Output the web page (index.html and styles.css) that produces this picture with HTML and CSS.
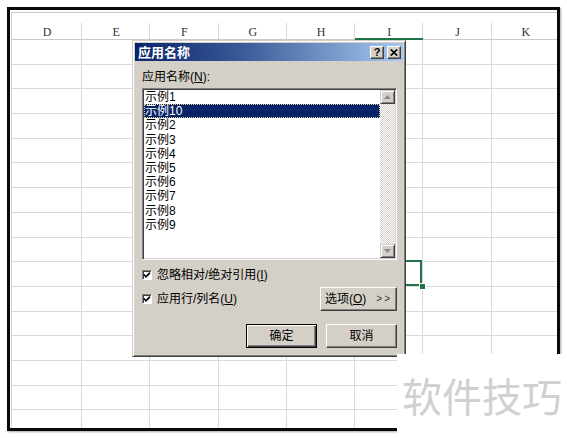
FILE: index.html
```html
<!DOCTYPE html>
<html lang="zh-CN">
<head>
<meta charset="utf-8">
<title>应用名称</title>
<link rel="stylesheet" href="styles.css">
</head>
<body>
<div class="screen">
  <div class="sheet">
    <div class="grid">
      <div class="hd">D</div><div class="hd">E</div><div class="hd">F</div><div class="hd">G</div><div class="hd">H</div><div class="hd on">I</div><div class="hd">J</div><div class="hd">K</div>
      <span></span><span></span><span></span><span></span><span></span><span></span><span></span><span></span>
      <span></span><span></span><span></span><span></span><span></span><span></span><span></span><span></span>
      <span></span><span></span><span></span><span></span><span></span><span></span><span></span><span></span>
      <span></span><span></span><span></span><span></span><span></span><span></span><span></span><span></span>
      <span></span><span></span><span></span><span></span><span></span><span></span><span></span><span></span>
      <span></span><span></span><span></span><span></span><span></span><span></span><span></span><span></span>
      <span></span><span></span><span></span><span></span><span></span><span></span><span></span><span></span>
      <span></span><span></span><span></span><span></span><span></span><span></span><span></span><span></span>
      <span></span><span></span><span></span><span></span><span></span><span></span><span></span><span></span>
      <span></span><span></span><span></span><span></span><span></span><span class="cur"></span><span></span><span></span>
      <span></span><span></span><span></span><span></span><span></span><span></span><span></span><span></span>
      <span></span><span></span><span></span><span></span><span></span><span></span><span></span><span></span>
      <span></span><span></span><span></span><span></span><span></span><span></span><span></span><span></span>
      <span></span><span></span><span></span><span></span><span></span><span></span><span></span><span></span>
      <span></span><span></span><span></span><span></span><span></span><span></span><span></span><span></span>
      <span></span><span></span><span></span><span></span><span></span><span></span><span></span><span></span>
    </div>
  </div>

  <div class="dialog">
    <div class="titlebar">
      <span class="title">应用名称</span>
      <span class="tbtns">
        <span class="tbtn">?</span>
        <span class="tbtn"><svg width="8" height="7" viewBox="0 0 8 7"><path d="M0.8 0.5 L7.2 6.5 M7.2 0.5 L0.8 6.5" stroke="#000" stroke-width="1.7" fill="none"/></svg></span>
      </span>
    </div>
    <div class="dbody">
      <div class="label">应用名称(<u>N</u>):</div>
      <div class="listbox">
        <ul class="items">
          <li>示例1</li>
          <li class="sel">示例10</li>
          <li>示例2</li>
          <li>示例3</li>
          <li>示例4</li>
          <li>示例5</li>
          <li>示例6</li>
          <li>示例7</li>
          <li>示例8</li>
          <li>示例9</li>
        </ul>
        <div class="vscroll">
          <div class="sbtn"><svg width="7" height="4" viewBox="0 0 7 4"><path d="M3.5 0 L7 4 H0 Z" fill="#8a8a8a"/></svg></div>
          <div class="track"></div>
          <div class="sbtn"><svg width="7" height="4" viewBox="0 0 7 4"><path d="M0 0 H7 L3.5 4 Z" fill="#8a8a8a"/></svg></div>
        </div>
      </div>
      <div class="chkrow r1">
        <span class="chk"><svg width="8" height="8" viewBox="0 0 8 8"><path d="M1 3.6 L3 5.8 L7 1.6" stroke="#000" stroke-width="1.6" fill="none"/></svg></span>
        <span>忽略相对/绝对引用(<u>I</u>)</span>
      </div>
      <div class="chkrow r2">
        <span class="chk"><svg width="8" height="8" viewBox="0 0 8 8"><path d="M1 3.6 L3 5.8 L7 1.6" stroke="#000" stroke-width="1.6" fill="none"/></svg></span>
        <span>应用行/列名(<u>U</u>)</span>
        <button class="btn opt">选项(<u>O</u>)<span class="more">&gt;&gt;</span></button>
      </div>
      <div class="actions">
        <button class="btn default">确定</button>
        <button class="btn">取消</button>
      </div>
    </div>
  </div>

  <div class="watermark">软件技巧</div>
</div>
</body>
</html>
```
FILE: styles.css
```css
html, body {
  margin: 0;
  padding: 0;
}
body {
  background: #fff;
  font-family: "Liberation Sans", "Noto Sans CJK SC", sans-serif;
}
.screen {
  position: relative;
  width: 567px;
  height: 438px;
  overflow: hidden;
  background: #fff;
}

/* spreadsheet */
.sheet {
  box-sizing: border-box;
  margin: 7px 0 0 7px;
  width: 553px;
  height: 424px;
  border: 3px solid #0a0a0a;
  overflow: hidden;
  background: #fff;
  box-shadow: 1px 1px 2px rgba(0, 0, 0, 0.35);
}
.grid {
  display: grid;
  grid-template-columns: 70px repeat(7, 68.3px);
  grid-template-rows: 27px;
  grid-auto-rows: 24.7px;
  margin: 2px 0 0 1px;
  border-top: 1px solid #cdcdcd;
  border-left: 1px solid #d6d6d6;
}
.hd {
  box-sizing: border-box;
  border-bottom: 1px solid #c9c9c9;
  display: flex;
  align-items: flex-end;
  justify-content: center;
  font: 12px/14px "Liberation Serif", serif;
  color: #333;
  background: linear-gradient(#d8d8d8, #d8d8d8) right bottom / 1px 16px no-repeat;
}
.hd.on {
  border-bottom-color: #217346;
  box-shadow: inset 0 -1px #217346;
}
.grid > span {
  box-sizing: border-box;
  border-right: 1px solid #dadada;
  border-bottom: 1px solid #dadada;
}
.grid > span.cur {
  position: relative;
}
.cur::before {
  content: "";
  position: absolute;
  top: -2px;
  left: -2px;
  right: 0;
  bottom: 0;
  border: 2px solid #217346;
}
.cur::after {
  content: "";
  position: absolute;
  right: -4px;
  bottom: -4px;
  width: 5px;
  height: 5px;
  background: #217346;
  border: 1px solid #fff;
}

/* dialog */
.dialog {
  position: absolute;
  left: 132px;
  top: 40px;
  width: 274px;
  height: 317px;
  box-sizing: border-box;
  background: #d4d0c8;
  border: 1px solid;
  border-color: #d4d0c8 #404040 #404040 #d4d0c8;
  box-shadow: inset 1px 1px #fff, inset -1px -1px #808080;
  padding: 2px;
  display: flex;
  flex-direction: column;
  font-size: 12px;
  color: #000;
}
.titlebar {
  height: 18px;
  display: flex;
  align-items: center;
  justify-content: space-between;
  padding: 0 2px 0 3px;
  background: linear-gradient(to right, #0a246a 0%, #3a5a98 40%, #a6caf0 100%);
}
.title {
  color: #fff;
  font-weight: bold;
  font-size: 13px;
  line-height: 18px;
  font-family: "Noto Sans CJK SC", sans-serif;
}
.tbtns {
  display: flex;
  gap: 3px;
}
.tbtn {
  width: 14px;
  height: 13px;
  box-sizing: border-box;
  background: #d4d0c8;
  border: 1px solid;
  border-color: #fff #404040 #404040 #fff;
  box-shadow: inset -1px -1px #808080;
  display: flex;
  align-items: center;
  justify-content: center;
  font: bold 11px/1 "Liberation Sans", sans-serif;
  color: #000;
}
.dbody {
  padding: 9px 6px 0 7px;
  display: flex;
  flex-direction: column;
}
.label {
  height: 14px;
  line-height: 14px;
}
.listbox {
  margin-top: 4px;
  height: 172px;
  box-sizing: border-box;
  border: 1px solid;
  border-color: #808080 #fff #fff #808080;
  box-shadow: inset 1px 1px #404040, inset -1px -1px #d4d0c8;
  padding: 1px;
  background: #fff;
  display: flex;
}
.items {
  flex: 1;
  margin: 0;
  padding: 0;
  list-style: none;
}
.items li {
  height: 14.2px;
  line-height: 14.2px;
  padding-left: 1px;
  white-space: nowrap;
}
.items li.sel {
  background: #0a246a;
  color: #fff;
  outline: 1px dotted #e6d79a;
  outline-offset: -1px;
}
.vscroll {
  width: 15px;
  display: flex;
  flex-direction: column;
}
.sbtn {
  height: 14px;
  box-sizing: border-box;
  background: #d4d0c8;
  border: 1px solid;
  border-color: #d4d0c8 #404040 #404040 #d4d0c8;
  box-shadow: inset 1px 1px #fff, inset -1px -1px #808080;
  display: flex;
  align-items: center;
  justify-content: center;
}
.track {
  flex: 1;
  background: repeating-conic-gradient(#d4d0c8 0 25%, #fff 0 50%) 0 0 / 2px 2px;
}
.chkrow {
  display: flex;
  align-items: center;
  gap: 5px;
  line-height: 14px;
}
.r1 {
  margin-top: 8px;
  height: 14px;
}
.r2 {
  margin-top: 5px;
  height: 24px;
}
.chk {
  width: 10px;
  height: 10px;
  box-sizing: border-box;
  background: #fff;
  border: 1px solid;
  border-color: #808080 #fff #fff #808080;
  box-shadow: inset 1px 1px #404040;
  display: flex;
  align-items: center;
  justify-content: center;
  flex: none;
}
.chk svg {
  display: block;
}
.btn {
  box-sizing: border-box;
  height: 24px;
  background: #d4d0c8;
  border: 1px solid;
  border-color: #fff #404040 #404040 #fff;
  box-shadow: inset -1px -1px #808080;
  font: 12px/1 "Liberation Sans", "Noto Sans CJK SC", sans-serif;
  color: #000;
  padding: 0;
  margin: 0;
  display: flex;
  align-items: center;
  justify-content: center;
}
.opt {
  margin-left: auto;
  width: 77px;
}
.more {
  margin-left: 10px;
  font-size: 10px;
  letter-spacing: 2px;
  color: #333;
}
.actions {
  margin-top: 13px;
  display: flex;
  justify-content: flex-end;
  gap: 9px;
}
.actions .btn {
  width: 71px;
}
.btn.default {
  border-color: #000;
  box-shadow: inset 1px 1px #fff, inset -1px -1px #404040, inset -2px -2px #808080;
}

/* watermark */
.watermark {
  position: absolute;
  left: 397px;
  top: 354px;
  right: 0;
  bottom: 0;
  background: #fff;
  padding: 21px 0 0 5px;
  font: 40px/40px "Noto Sans CJK SC", sans-serif;
  color: #d0d0d0;
  white-space: nowrap;
}
```
